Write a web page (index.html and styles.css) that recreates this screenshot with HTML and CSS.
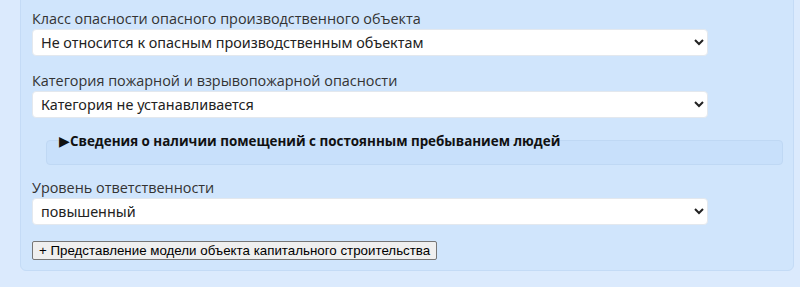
FILE: index.html
```html
<!DOCTYPE html>
<html>
<head>
    <title>Объект капитального строительства</title>
    <link rel="stylesheet" href="styles.css">
</head>
<body>
    <div class="panel">
        <div class="field">
            <label for="hazardClass">Класс опасности опасного производственного объекта</label>
            <select id="hazardClass">
                <option>Не относится к опасным производственным объектам</option>
            </select>
        </div>

        <div class="field">
            <label for="fireCategory">Категория пожарной и взрывопожарной опасности</label>
            <select id="fireCategory">
                <option>Категория не устанавливается</option>
            </select>
        </div>

        <details class="rooms">
            <summary>Сведения о наличии помещений с постоянным пребыванием людей</summary>
        </details>

        <div class="field">
            <label for="responsibility">Уровень ответственности</label>
            <select id="responsibility">
                <option>повышенный</option>
            </select>
        </div>

        <button class="add-model">+ Представление модели объекта капитального строительства</button>
    </div>
</body>
</html>
```

FILE: styles.css
```css
html, body {
    margin: 0;
    padding: 0;
}
body {
    font-family: "Open Sans", "Liberation Sans", sans-serif;
    font-size: 14px;
    color: #333;
    background: #dbeafd;
    height: 287px;
    overflow: hidden;
}
.panel {
    margin: -10px 6px 0 20px;
    padding: 18px 11px 10px 11px;
    background: #d0e5fc;
    border: 1px solid #c4dbf6;
    border-radius: 6px;
}
.field {
    margin-bottom: 15px;
}
.field label {
    display: block;
    line-height: 20px;
    font-size: 14.4px;
}
.field select {
    display: block;
    width: 676px;
    height: 27px;
    padding: 0 4px;
    font-family: "Noto Sans", "Open Sans", sans-serif;
    font-size: 14.4px;
    color: #222;
    background: #fff;
    border: 1px solid #e3e8ee;
    border-radius: 4px;
}
.rooms {
    margin: 22px -1px 13px 14px;
    padding-bottom: 13px;
    background: #c8e0fb;
    border: 1px solid #bfd8f4;
    border-radius: 4px;
}
.rooms summary {
    margin-top: -10px;
    padding-left: 12px;
    line-height: 20px;
    font-size: 13.4px;
    font-weight: bold;
    color: #111;
    list-style: none;
    cursor: pointer;
}
.rooms summary::-webkit-details-marker {
    display: none;
}
.rooms summary::before {
    content: "▶";
    display: inline-block;
    width: 11px;
    font-family: "DejaVu Sans", sans-serif;
    font-weight: normal;
    font-size: 14px;
}
.add-model {
    margin-top: -2px;
    font-family: "Liberation Sans", Arial, sans-serif;
    font-size: 13.33px;
    color: #000;
    padding: 1px 6px;
    background: #efefef;
    border: 1px solid #767676;
    border-radius: 2px;
}
```
